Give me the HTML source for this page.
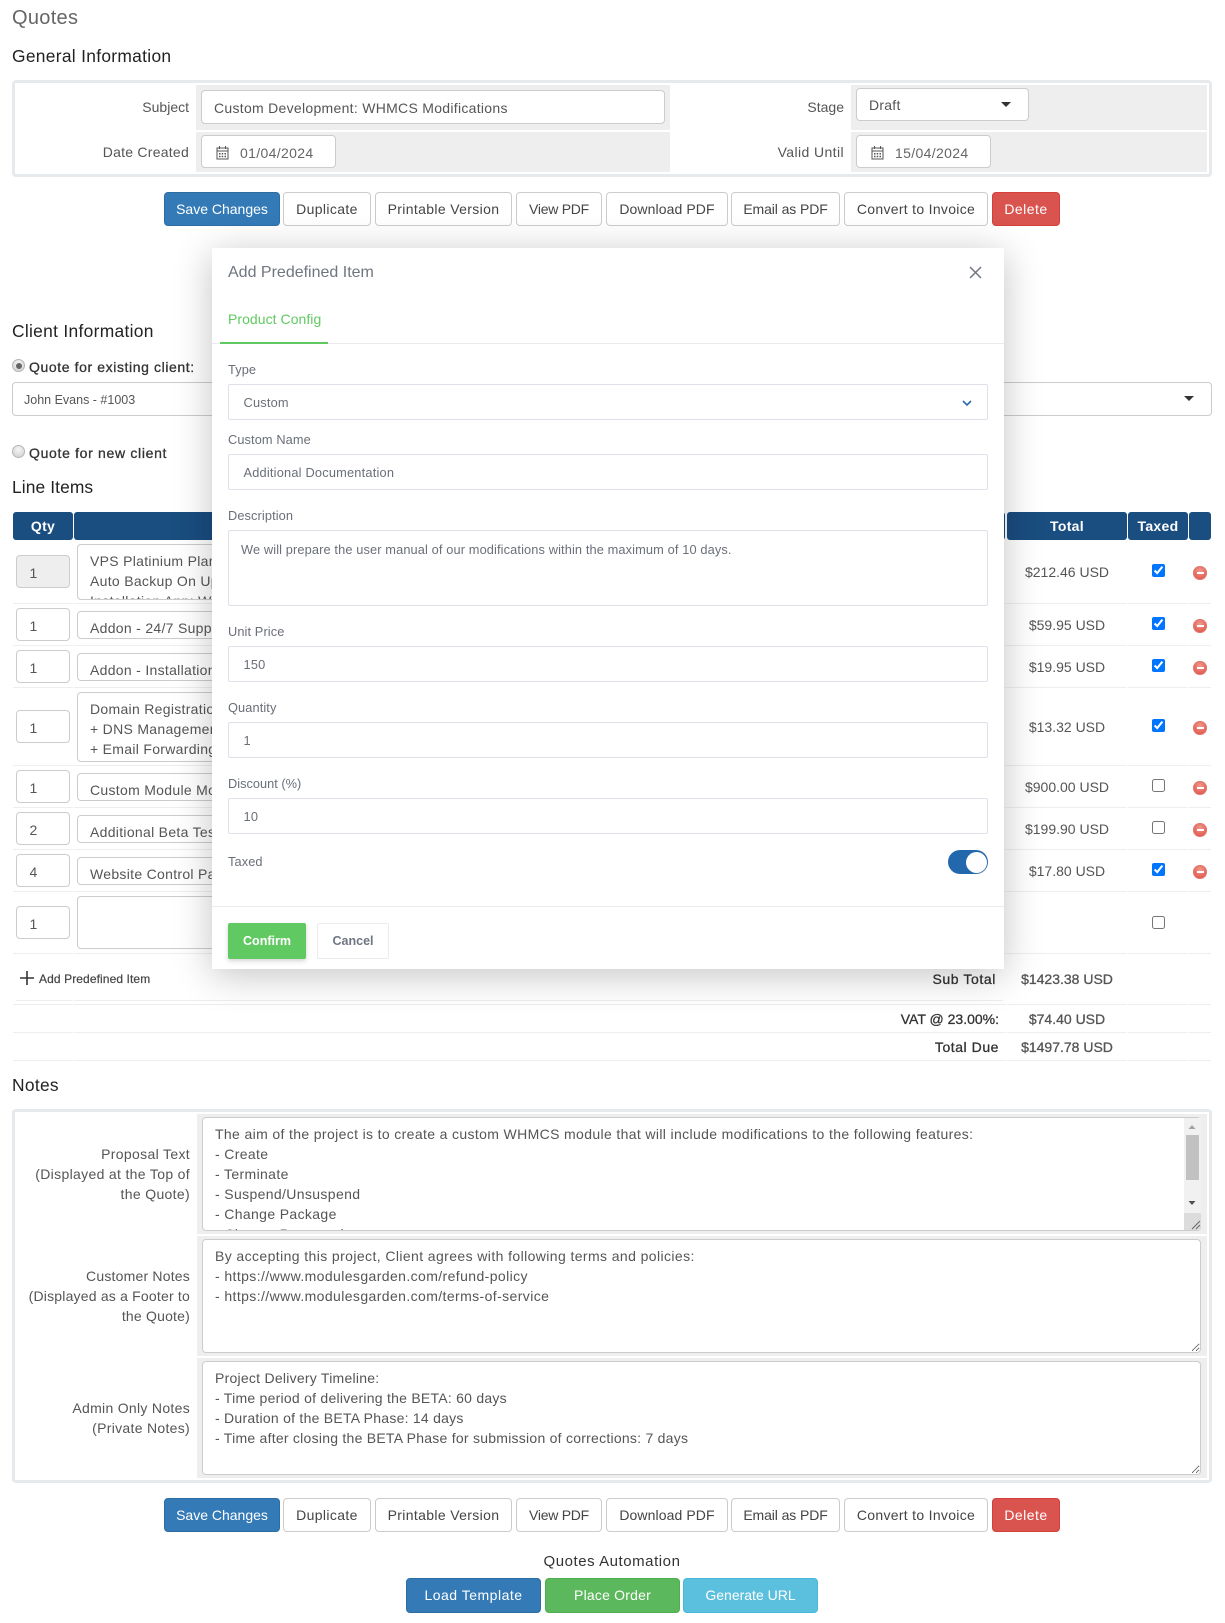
<!DOCTYPE html>
<html lang="en"><head><meta charset="utf-8"><title>Quotes</title>
<style>
html,body{margin:0;padding:0;background:#fff}
body{position:relative;width:1225px;height:1623px;overflow:hidden;font-family:"Liberation Sans",sans-serif}
.t{position:absolute;white-space:nowrap;line-height:20px;font-size:14px;letter-spacing:.25px;color:#555}
.r{text-align:right}
.c{text-align:center}
.h{font-size:17.4px;letter-spacing:.3px;color:#222}
.s{-webkit-text-stroke:.3px;color:#333}
.a{position:absolute;box-sizing:border-box}
.i{position:absolute;box-sizing:border-box;border:1px solid #ccc;border-radius:4px;background:#fff;overflow:hidden}
.g{position:absolute;background:#eee}
.fr{position:absolute;box-sizing:border-box;border:3px solid #e6eaed;border-radius:4px;background:#fff}
.btn{position:absolute;box-sizing:border-box;display:flex;align-items:center;justify-content:center;height:34px;border:1px solid #ccc;border-radius:4px;background:#fff;color:#444;font-size:14px;white-space:nowrap}
.p{background:#337ab7;border-color:#2e6da4;color:#fff}
.d{background:#d9534f;border-color:#d43f3a;color:#fff}
.th{position:absolute;top:512px;height:28px;background:#1a4d80;border-radius:3px;color:#fff;font-weight:bold;font-size:14px;letter-spacing:.3px;line-height:28px;text-align:center}
.ln{position:absolute;left:13px;width:1198px;height:1px;background:#eee}
.v{position:absolute;top:540px;width:1px;height:522px;background:#fff}
.q{position:absolute;left:16px;width:54px;height:33px;box-sizing:border-box;border:1px solid #ccc;border-radius:4px;background:#fff;color:#555;font-size:14px;line-height:35px;padding-left:12.500px}
.x{position:absolute;left:77px;width:200px;box-sizing:border-box;border:1px solid #ccc;border-radius:4px;background:#fff;color:#555;font-size:14px;letter-spacing:.3px;line-height:20px;padding:6px 0 0 12px;overflow:hidden;white-space:nowrap}
.m{position:absolute;left:1007px;width:120px;text-align:center;line-height:20px;color:#555;font-size:14px;white-space:nowrap}
.cb{position:absolute;left:1152px;width:13px;height:13px;margin:0;accent-color:#0075ff}
.del{position:absolute;left:1193px;width:14px;height:14px;border-radius:50%;background:radial-gradient(circle at 50% 35%,#f09a8e,#e2564c 75%);box-shadow:inset 0 0 0 1px #df7d73}
.del:after{content:"";position:absolute;left:3.500px;top:5.700px;width:7px;height:2.600px;background:#fff}
.rad{position:absolute;left:12px;width:13px;height:13px;box-sizing:border-box;border-radius:50%;border:1px solid #b5b5b5;background:radial-gradient(circle at 50% 30%,#f4f4f4,#cfcfcf)}
.rad.on:after{content:"";position:absolute;left:2.500px;top:2.500px;width:6px;height:6px;border-radius:50%;background:#666}
.car{position:absolute;width:0;height:0;border-left:5px solid transparent;border-right:5px solid transparent;border-top:5px solid #333}
.ml{position:absolute;left:228px;line-height:16px;font-size:12.800px;letter-spacing:.1px;color:#6a6f78;white-space:nowrap}
.mi{position:absolute;left:228px;width:760px;height:36px;box-sizing:border-box;border:1px solid #dfe1e8;border-radius:2px;background:#fff;color:#6a6f78;font-size:12.800px;letter-spacing:.2px;line-height:35px;padding-left:14.500px}
textarea{position:absolute;left:202px;width:999px;box-sizing:border-box;border:1px solid #ccc;border-radius:4px;background:#fff;color:#555;font:14px/20px "Liberation Sans",sans-serif;letter-spacing:.33px;padding:6px 12px 0;margin:0;overflow:hidden;outline:0;white-space:pre-wrap}
</style></head><body>

<div class="t" style="left:12px;top:7px;font-size:20px;letter-spacing:.3px;line-height:22px;color:#666">Quotes</div>
<div class="t h" style="left:12px;top:46px">General Information</div>

<div class="fr" style="left:12px;top:80px;width:1200px;height:97px"></div>
<div class="g" style="left:196px;top:85px;width:474px;height:45px"></div>
<div class="g" style="left:196px;top:132px;width:474px;height:40px"></div>
<div class="g" style="left:851px;top:85px;width:356px;height:45px"></div>
<div class="g" style="left:851px;top:132px;width:356px;height:40px"></div>
<div class="t r" style="right:1036px;top:97px;letter-spacing:0">Subject</div>
<div class="t r" style="right:1036px;top:142px">Date Created</div>
<div class="t r" style="right:381px;top:97px;letter-spacing:0">Stage</div>
<div class="t r" style="right:381px;top:142px;letter-spacing:.4px">Valid Until</div>
<div class="i" style="left:201px;top:90px;width:464px;height:34px"></div>
<div class="t" style="left:214px;top:98px;letter-spacing:.29px">Custom Development: WHMCS Modifications</div>
<div class="i" style="left:201px;top:135px;width:135px;height:33px"></div>
<svg class="a" style="left:216px;top:145px" width="13" height="15" viewBox="0 0 13 15"><path d="M1 3h11v11H1zM1 6h11M3.500 1v3M9.500 1v3" fill="none" stroke="#555"/><path d="M3 8h1.500v1.500H3zM5.700 8h1.500v1.500H5.700zM8.500 8h1.500v1.500H8.500zM3 10.700h1.500v1.500H3zM5.700 10.700h1.500v1.500H5.700zM8.500 10.700h1.500v1.500H8.500z" fill="#555"/></svg>
<div class="t" style="left:240px;top:143px;color:#666;letter-spacing:.35px">01/04/2024</div>
<div class="i" style="left:856px;top:88px;width:173px;height:33px"></div>
<div class="t" style="left:869px;top:95px">Draft</div>
<div class="car" style="left:1001px;top:102px"></div>
<div class="i" style="left:856px;top:135px;width:135px;height:33px"></div>
<svg class="a" style="left:871px;top:145px" width="13" height="15" viewBox="0 0 13 15"><path d="M1 3h11v11H1zM1 6h11M3.500 1v3M9.500 1v3" fill="none" stroke="#555"/><path d="M3 8h1.500v1.500H3zM5.700 8h1.500v1.500H5.700zM8.500 8h1.500v1.500H8.500zM3 10.700h1.500v1.500H3zM5.700 10.700h1.500v1.500H5.700zM8.500 10.700h1.500v1.500H8.500z" fill="#555"/></svg>
<div class="t" style="left:895px;top:143px;color:#666;letter-spacing:.35px">15/04/2024</div>

<div class="btn p" style="left:164px;top:192px;width:116px">Save Changes</div>
<div class="btn" style="left:283px;top:192px;width:88px;letter-spacing:.37px">Duplicate</div>
<div class="btn" style="left:375px;top:192px;width:137px;letter-spacing:.35px">Printable Version</div>
<div class="btn" style="left:516px;top:192px;width:86px;letter-spacing:-.26px">View PDF</div>
<div class="btn" style="left:606px;top:192px;width:122px;letter-spacing:.1px">Download PDF</div>
<div class="btn" style="left:731px;top:192px;width:109px;letter-spacing:-.1px">Email as PDF</div>
<div class="btn" style="left:844px;top:192px;width:144px;letter-spacing:.3px">Convert to Invoice</div>
<div class="btn d" style="left:992px;top:192px;width:68px;letter-spacing:.48px">Delete</div>

<div class="t h" style="left:12px;top:321px">Client Information</div>
<div class="rad on" style="left:12px;top:359px"></div>
<div class="t s" style="left:29px;top:357px;letter-spacing:.6px">Quote for existing client:</div>
<div class="i" style="left:12px;top:382px;width:1200px;height:34px"></div>
<div class="t" style="left:24px;top:390px;font-size:12.500px;letter-spacing:0">John Evans - #1003</div>
<div class="car" style="left:1184px;top:396px"></div>
<div class="rad" style="left:12px;top:445px"></div>
<div class="t s" style="left:29px;top:443px;letter-spacing:.68px">Quote for new client</div>
<div class="t h" style="left:12px;top:477px;letter-spacing:.1px">Line Items</div>

<div class="th" style="left:13px;width:60px">Qty</div>
<div class="th" style="left:74px;width:931px"></div>
<div class="th" style="left:1007px;width:120px">Total</div>
<div class="th" style="left:1128px;width:60px">Taxed</div>
<div class="th" style="left:1189px;width:22px"></div>

<div class="ln" style="top:603px"></div>
<div class="ln" style="top:645px"></div>
<div class="ln" style="top:687px"></div>
<div class="ln" style="top:765px"></div>
<div class="ln" style="top:807px"></div>
<div class="ln" style="top:849px"></div>
<div class="ln" style="top:891px"></div>
<div class="ln" style="top:953px"></div>
<div class="ln" style="top:1000px;left:16px;width:987px"></div>
<div class="ln" style="top:1004px"></div>
<div class="ln" style="top:1032px"></div>
<div class="ln" style="top:1060px"></div>
<div class="v" style="left:73px"></div>
<div class="v" style="left:1006px"></div>
<div class="v" style="left:1127px"></div>
<div class="v" style="left:1188px"></div>

<div class="q" style="top:555px;background:#eee">1</div>
<div class="q" style="top:608px">1</div>
<div class="q" style="top:650px">1</div>
<div class="q" style="top:710px">1</div>
<div class="q" style="top:770px">1</div>
<div class="q" style="top:812px">2</div>
<div class="q" style="top:854px">4</div>
<div class="q" style="top:906px">1</div>

<div class="x" style="top:544px;height:56px">VPS Platinium Plan<br>Auto Backup On Upgrade<br>Installation App: WordPress</div>
<div class="x" style="top:611px;height:28px">Addon - 24/7 Support</div>
<div class="x" style="top:653px;height:28px">Addon - Installation</div>
<div class="x" style="top:692px;height:70px">Domain Registration<br>+ DNS Management<br>+ Email Forwarding</div>
<div class="x" style="top:773px;height:28px">Custom Module Modifications</div>
<div class="x" style="top:815px;height:28px">Additional Beta Testing</div>
<div class="x" style="top:857px;height:28px">Website Control Panel</div>
<div class="x" style="top:896px;height:53px"></div>

<div class="m" style="top:562px">$212.46 USD</div>
<div class="m" style="top:615px">$59.95 USD</div>
<div class="m" style="top:657px">$19.95 USD</div>
<div class="m" style="top:717px">$13.32 USD</div>
<div class="m" style="top:777px">$900.00 USD</div>
<div class="m" style="top:819px">$199.90 USD</div>
<div class="m" style="top:861px">$17.80 USD</div>

<input class="cb" type="checkbox" checked style="top:564px">
<input class="cb" type="checkbox" checked style="top:617px">
<input class="cb" type="checkbox" checked style="top:659px">
<input class="cb" type="checkbox" checked style="top:719px">
<input class="cb" type="checkbox" style="top:779px">
<input class="cb" type="checkbox" style="top:821px">
<input class="cb" type="checkbox" checked style="top:863px">
<input class="cb" type="checkbox" style="top:916px">

<div class="del" style="top:566px"></div>
<div class="del" style="top:619px"></div>
<div class="del" style="top:661px"></div>
<div class="del" style="top:721px"></div>
<div class="del" style="top:781px"></div>
<div class="del" style="top:823px"></div>
<div class="del" style="top:865px"></div>

<svg class="a" style="left:20px;top:971px" width="14" height="14" viewBox="0 0 14 14"><path d="M7 0v14M0 7h14" stroke="#333" stroke-width="1.600" fill="none"/></svg>
<div class="t s" style="left:39px;top:969px;font-size:12px;letter-spacing:.1px;-webkit-text-stroke:.2px;color:#444">Add Predefined Item</div>
<div class="t r s" style="right:229px;top:969px;letter-spacing:.6px">Sub Total</div>
<div class="m s" style="top:969px">$1423.38 USD</div>
<div class="t r s" style="right:226px;top:1009px;letter-spacing:0">VAT @ 23.00%:</div>
<div class="m s" style="top:1009px">$74.40 USD</div>
<div class="t r s" style="right:226px;top:1037px;letter-spacing:.55px">Total Due</div>
<div class="m s" style="top:1037px">$1497.78 USD</div>

<div class="t h" style="left:12px;top:1075px">Notes</div>
<div class="fr" style="left:12px;top:1109px;width:1200px;height:374px"></div>
<div class="g" style="left:197px;top:1114px;width:1010px;height:120px"></div>
<div class="g" style="left:197px;top:1236px;width:1010px;height:120px"></div>
<div class="g" style="left:197px;top:1358px;width:1010px;height:120px"></div>
<div class="t r" style="right:1035px;top:1144px;letter-spacing:.33px">Proposal Text<br>(Displayed at the Top of<br>the Quote)</div>
<div class="t r" style="right:1035px;top:1266px;letter-spacing:.2px">Customer Notes<br>(Displayed as a Footer to<br>the Quote)</div>
<div class="t r" style="right:1035px;top:1398px;letter-spacing:.3px">Admin Only Notes<br>(Private Notes)</div>
<textarea readonly style="top:1117px;height:114px;resize:none;letter-spacing:.36px">The aim of the project is to create a custom WHMCS module that will include modifications to the following features:
- Create
- Terminate
- Suspend/Unsuspend
- Change Package
- Change Password</textarea>
<div class="a" style="left:1184px;top:1118px;width:17px;height:112px;background:#f1f1f1"></div>
<div class="a" style="left:1186px;top:1135px;width:13px;height:45px;background:#c1c1c1"></div>
<svg class="a" style="left:1186px;top:1124px" width="12" height="6" viewBox="0 0 12 6"><path d="M6 1l3.500 4h-7z" fill="#a3a3a3"/></svg>
<svg class="a" style="left:1186px;top:1200px" width="12" height="6" viewBox="0 0 12 6"><path d="M2.500 1h7L6 5z" fill="#505050"/></svg>
<div class="a" style="left:1184px;top:1213px;width:17px;height:17px;background:#dcdcdc"></div>
<svg class="a" style="left:1191px;top:1220px" width="10" height="10" viewBox="0 0 10 10"><path d="M1 9l8-8M5 9l4-4" stroke="#666" fill="none"/></svg>
<textarea readonly style="top:1239px;height:114px;resize:both;letter-spacing:.4px">By accepting this project, Client agrees with following terms and policies:
- https://www.modulesgarden.com/refund-policy
- https://www.modulesgarden.com/terms-of-service</textarea>
<textarea readonly style="top:1361px;height:114px;resize:both;letter-spacing:.25px">Project Delivery Timeline:
- Time period of delivering the BETA: 60 days
- Duration of the BETA Phase: 14 days
- Time after closing the BETA Phase for submission of corrections: 7 days</textarea>

<div class="btn p" style="left:164px;top:1498px;width:116px">Save Changes</div>
<div class="btn" style="left:283px;top:1498px;width:88px;letter-spacing:.37px">Duplicate</div>
<div class="btn" style="left:375px;top:1498px;width:137px;letter-spacing:.35px">Printable Version</div>
<div class="btn" style="left:516px;top:1498px;width:86px;letter-spacing:-.26px">View PDF</div>
<div class="btn" style="left:606px;top:1498px;width:122px;letter-spacing:.1px">Download PDF</div>
<div class="btn" style="left:731px;top:1498px;width:109px;letter-spacing:-.1px">Email as PDF</div>
<div class="btn" style="left:844px;top:1498px;width:144px;letter-spacing:.3px">Convert to Invoice</div>
<div class="btn d" style="left:992px;top:1498px;width:68px;letter-spacing:.48px">Delete</div>

<div class="t c" style="left:412px;width:400px;top:1552px;color:#333;font-size:15px;letter-spacing:.55px">Quotes Automation</div>
<div class="btn p" style="left:406px;top:1578px;width:135px;height:35px;padding-bottom:2px;letter-spacing:.5px">Load Template</div>
<div class="btn" style="left:545px;top:1578px;width:135px;height:35px;padding-bottom:2px;background:#5cb85c;border-color:#4cae4c;color:#fff;letter-spacing:.2px">Place Order</div>
<div class="btn" style="left:683px;top:1578px;width:135px;height:35px;padding-bottom:2px;background:#5bc0de;border-color:#46b8da;color:#fff">Generate URL</div>

<!-- Modal -->
<div class="a" style="left:212px;top:248px;width:792px;height:721px;background:#fff;box-shadow:0 6px 36px rgba(0,0,0,.24)"></div>
<div class="a" style="left:228px;top:263px;font-size:16px;line-height:20px;color:#6f7680;white-space:nowrap">Add Predefined Item</div>
<svg class="a" style="left:969px;top:266px" width="13" height="13" viewBox="0 0 13 13"><path d="M1 1l11 11M12 1L1 12" stroke="#6e7680" stroke-width="1.500" fill="none"/></svg>
<div class="a" style="left:228px;top:311px;font-size:14px;line-height:16px;letter-spacing:.05px;color:#61c962;white-space:nowrap">Product Config</div>
<div class="a" style="left:212px;top:343px;width:792px;height:1px;background:#e9ebef"></div>
<div class="a" style="left:220px;top:342px;width:108px;height:2px;background:#61c962"></div>

<div class="ml" style="top:362px">Type</div>
<div class="mi" style="top:384px">Custom</div>
<svg class="a" style="left:962px;top:400px" width="10" height="7" viewBox="0 0 10 7"><path d="M1 1l4 4 4-4" stroke="#2a6ab0" stroke-width="1.600" fill="none"/></svg>
<div class="ml" style="top:432px">Custom Name</div>
<div class="mi" style="top:454px">Additional Documentation</div>
<div class="ml" style="top:508px">Description</div>
<div class="mi" style="top:530px;height:76px;padding-left:12px;line-height:38px;letter-spacing:.12px">We will prepare the user manual of our modifications within the maximum of 10 days.</div>
<div class="ml" style="top:624px">Unit Price</div>
<div class="mi" style="top:646px">150</div>
<div class="ml" style="top:700px">Quantity</div>
<div class="mi" style="top:722px">1</div>
<div class="ml" style="top:776px;letter-spacing:0">Discount (%)</div>
<div class="mi" style="top:798px">10</div>
<div class="ml" style="top:854px">Taxed</div>
<div class="a" style="left:948px;top:850px;width:40px;height:24px;border-radius:12px;background:#2368ac"></div>
<div class="a" style="left:966px;top:851.500px;width:21px;height:21px;border-radius:50%;background:#fff"></div>
<div class="a" style="left:212px;top:906px;width:792px;height:1px;background:#e9ebef"></div>
<div class="a" style="left:228px;top:923px;width:78px;height:36px;border-radius:2px;background:#61c962;box-shadow:0 2px 5px rgba(0,0,0,.18);color:#fff;font-weight:bold;font-size:12.500px;line-height:36px;text-align:center">Confirm</div>
<div class="a" style="left:317px;top:923px;width:72px;height:36px;border:1px solid #e9ebef;border-radius:2px;color:#6f7680;font-weight:bold;font-size:12.500px;line-height:34px;text-align:center">Cancel</div>
</body></html>
